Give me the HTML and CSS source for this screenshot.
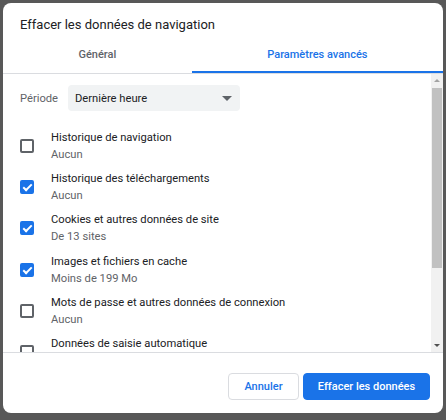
FILE: index.html
```html
<!DOCTYPE html>
<html lang="fr">
<head>
  <meta charset="UTF-8" />
  <title>Effacer les données de navigation</title>
  <link rel="stylesheet" href="styles.css">
</head>
<body>
<div class="dialog">
  <div class="title">Effacer les données de navigation</div>

  <div class="tabs">
    <div class="tab">Général</div>
    <div class="tab active">Paramètres avancés</div>
  </div>

  <div class="body">
    <div class="list">
      <div class="period">
        <span class="period-label">Période</span>
        <div class="select">
          <span>Dernière heure</span>
          <span class="caret"></span>
        </div>
      </div>

      <div class="row">
        <span class="box"></span>
        <div class="texts">
          <div class="name">Historique de navigation</div>
          <div class="sub">Aucun</div>
        </div>
      </div>
      <div class="row">
        <span class="box checked"></span>
        <div class="texts">
          <div class="name">Historique des téléchargements</div>
          <div class="sub">Aucun</div>
        </div>
      </div>
      <div class="row">
        <span class="box checked"></span>
        <div class="texts">
          <div class="name">Cookies et autres données de site</div>
          <div class="sub">De 13 sites</div>
        </div>
      </div>
      <div class="row">
        <span class="box checked"></span>
        <div class="texts">
          <div class="name">Images et fichiers en cache</div>
          <div class="sub">Moins de 199 Mo</div>
        </div>
      </div>
      <div class="row">
        <span class="box"></span>
        <div class="texts">
          <div class="name">Mots de passe et autres données de connexion</div>
          <div class="sub">Aucun</div>
        </div>
      </div>
      <div class="row">
        <span class="box"></span>
        <div class="texts">
          <div class="name">Données de saisie automatique</div>
          <div class="sub">Aucun</div>
        </div>
      </div>
    </div>

    <div class="scrollbar">
      <span class="arrow up"></span>
      <div class="track"><div class="thumb"></div></div>
      <span class="arrow down"></span>
    </div>
  </div>

  <div class="footer">
    <button class="btn cancel">Annuler</button>
    <button class="btn primary">Effacer les données</button>
  </div>
</div>
</body>
</html>
```

FILE: styles.css
```css
body {
  margin: 0;
  padding: 3px 3px 7px 3px;
  height: 420px;
  box-sizing: border-box;
  background: #585858;
  font-family: Roboto, "Liberation Sans", sans-serif;
  color: #202124;
  font-size: 11.2px;
}

.dialog {
  background: #fff;
  border-radius: 8px;
  height: 410px;
  display: flex;
  flex-direction: column;
  overflow: hidden;
}

.title {
  font-size: 13px;
  line-height: 20px;
  padding: 12px 17px 0;
  height: 22px;
}

.tabs {
  display: flex;
  border-bottom: 1px solid #dadce0;
  font-size: 11px;
}

.tab {
  flex: auto;
  text-align: center;
  font-weight: 500;
  color: #5f6368;
  height: 34px;
  line-height: 36px;
  border-bottom: 2px solid transparent;
}

.tab.active {
  color: #1a73e8;
  border-bottom-color: #1a73e8;
}

.body {
  height: 278px;
  display: flex;
  border-bottom: 1px solid #dadce0;
}

.list {
  flex: 1;
  overflow: hidden;
  padding: 11px 0 0 17px;
}

.period {
  display: flex;
  align-items: center;
  margin-bottom: 14px;
}

.period-label {
  color: #5f6368;
  width: 48px;
}

.select {
  width: 172px;
  height: 26px;
  background: #f1f3f4;
  border-radius: 4px;
  display: flex;
  align-items: center;
  justify-content: space-between;
  padding: 0 7px;
  box-sizing: border-box;
}

.caret {
  width: 0;
  height: 0;
  border-left: 5px solid transparent;
  border-right: 5px solid transparent;
  border-top: 5px solid #5f6368;
  margin-right: 1px;
}

.row {
  display: flex;
  align-items: center;
  padding: 4px 0 3.2px;
}

.box {
  width: 14px;
  height: 14px;
  box-sizing: border-box;
  border: 2px solid #5f6368;
  border-radius: 2px;
  margin-right: 17px;
  flex: none;
  position: relative;
}

.box.checked {
  background: #1a73e8;
  border-color: #1a73e8;
}

.box.checked::after {
  content: "";
  position: absolute;
  left: 3px;
  top: 0;
  width: 3px;
  height: 7px;
  border-right: 2px solid #fff;
  border-bottom: 2px solid #fff;
  transform: rotate(45deg);
}

.name, .sub {
  line-height: 17px;
}

.sub {
  color: #5f6368;
}

.scrollbar {
  width: 12px;
  background: #f1f1f1;
  display: flex;
  flex-direction: column;
  align-items: center;
}

.arrow {
  width: 0;
  height: 0;
  border-left: 3px solid transparent;
  border-right: 3px solid transparent;
  margin: 5px 0;
}

.arrow.up {
  border-bottom: 3px solid #a3a3a3;
}

.arrow.down {
  border-top: 3px solid #505050;
}

.track {
  flex: 1;
  width: 100%;
}

.thumb {
  height: 180px;
  background: #c1c1c1;
  margin: 1px 1px 0;
}

.footer {
  flex: 1;
  display: flex;
  justify-content: flex-end;
  align-items: flex-start;
  gap: 4px;
  padding: 20px 13px 0 0;
}

.btn {
  font-family: Roboto, "Liberation Sans", sans-serif;
  font-size: 11px;
  font-weight: 500;
  height: 27px;
  border-radius: 4px;
  padding: 0 10px;
  cursor: pointer;
}

.cancel {
  width: 71px;
  background: #fff;
  color: #1a73e8;
  border: 1px solid #dadce0;
}

.primary {
  width: 127px;
  background: #1a73e8;
  color: #fff;
  border: 1px solid #1a73e8;
}
```
